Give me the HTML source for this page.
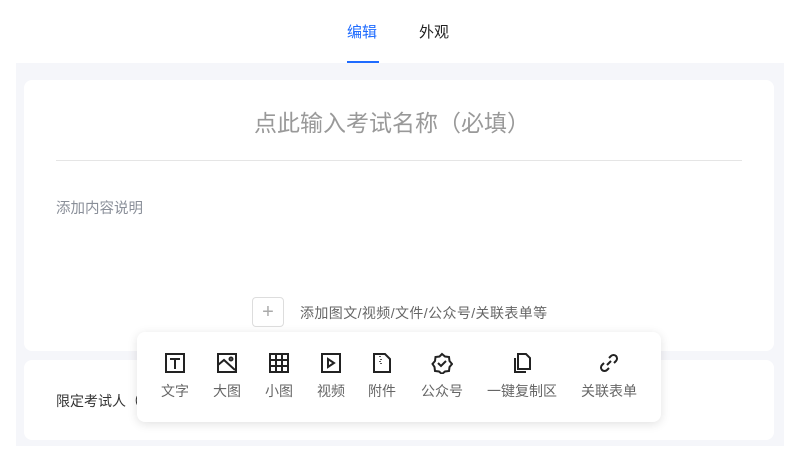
<!DOCTYPE html>
<html><head><meta charset="utf-8"><style>
*{margin:0;padding:0;box-sizing:border-box}
body{width:800px;height:450px;background:#fff;font-family:"Liberation Sans","Noto Sans CJK SC",sans-serif;position:relative;overflow:hidden}
.abs{position:absolute}
.tab{font-size:15px;top:21px}
.gray{left:16px;top:63px;width:768px;height:383px;background:#f5f6fa}
.card{background:#fff;border-radius:8px}
.pop{left:137px;top:332px;width:524px;height:90px;background:#fff;border-radius:8px;box-shadow:0 2px 10px rgba(0,0,0,.12)}
.it{position:absolute;top:0;width:80px;margin-left:-40px;text-align:center}
.it svg{position:absolute;left:29px;top:20px}
.it span{position:absolute;top:49px;left:0;width:80px;font-size:14px;color:#666}
</style></head><body>
<div class="abs tab" style="left:347px;color:#1e6bff">编辑</div>
<div class="abs tab" style="left:419px;color:#222">外观</div>
<div class="abs" style="left:347px;top:61px;width:32px;height:2px;background:#1e6bff"></div>
<div class="abs gray"></div>
<div class="abs card" style="left:24px;top:80px;width:750px;height:271px"></div>
<div class="abs" style="left:0;top:104px;width:784px;text-align:center;font-size:23px;color:#999">点此输入考试名称（必填）</div>
<div class="abs" style="left:56px;top:160px;width:686px;height:1px;background:#e5e5e5"></div>
<div class="abs" style="left:56px;top:197px;font-size:14.5px;color:#8a8f99">添加内容说明</div>
<div class="abs" style="left:252px;top:297px;width:32px;height:30px;border:1px solid #ddd;border-radius:4px;text-align:center;line-height:28px;font-size:20px;color:#aaa">+</div>
<div class="abs" style="left:300px;top:303px;font-size:14px;letter-spacing:0.4px;color:#666">添加图文/视频/文件/公众号/关联表单等</div>
<div class="abs card" style="left:24px;top:360px;width:750px;height:80px"></div>
<div class="abs" style="left:56px;top:391px;font-size:14px;color:#333">限定考试人（</div>
<div class="abs pop">
<div class="it" style="left:38px"><svg width="22" height="22" viewBox="0 0 22 22" fill="none" stroke="#222" stroke-width="2"><rect x="2" y="2" width="18" height="18"/><path d="M6 7h10M11 7v10"/></svg><span>文字</span></div>
<div class="it" style="left:90px"><svg width="22" height="22" viewBox="0 0 22 22" fill="none" stroke="#222" stroke-width="2"><rect x="2" y="2" width="18" height="18"/><path d="M2 13l6-5 11 10"/><circle cx="15" cy="7" r="1.5"/></svg><span>大图</span></div>
<div class="it" style="left:142px"><svg width="22" height="22" viewBox="0 0 22 22" fill="none" stroke="#222" stroke-width="2"><rect x="2" y="2" width="18" height="18"/><path d="M8 2v18M14 2v18M2 8h18M2 14h18"/></svg><span>小图</span></div>
<div class="it" style="left:194px"><svg width="22" height="22" viewBox="0 0 22 22" fill="none" stroke="#222" stroke-width="2"><rect x="2" y="2" width="18" height="18"/><path d="M8 7v8l6-4z"/></svg><span>视频</span></div>
<div class="it" style="left:245px"><svg width="22" height="22" viewBox="0 0 22 22" fill="none" stroke="#222" stroke-width="2"><path d="M3 2h11l5 5v13H3z"/><path d="M9 4v1M10 7v1M9 9v1M10 11v1" stroke-width="1.5"/></svg><span>附件</span></div>
<div class="it" style="left:305px"><svg width="22" height="22" viewBox="0 0 22 22" fill="none" stroke="#222" stroke-width="2"><path d="M11 2l3 2.5 4 .5.5 4 2.5 3-2.5 3-.5 4-4 .5-3 2.5-3-2.5-4-.5-.5-4L1.5 12 4 9l.5-4 4-.5z"/><path d="M7 11l3 3 5-5"/></svg><span>公众号</span></div>
<div class="it" style="left:385px"><svg width="22" height="22" viewBox="0 0 22 22" fill="none" stroke="#222" stroke-width="2"><path d="M7 2h8l4 4v11H7z"/><path d="M4 6v14h11"/></svg><span>一键复制区</span></div>
<div class="it" style="left:472px"><svg width="22" height="22" viewBox="0 0 22 22" fill="none" stroke="#222" stroke-width="2"><path d="M9 13l4-4"/><path d="M11 6l2-2a3.5 3.5 0 015 5l-2 2"/><path d="M11 16l-2 2a3.5 3.5 0 01-5-5l2-2"/></svg><span>关联表单</span></div>
</div>
</body></html>
